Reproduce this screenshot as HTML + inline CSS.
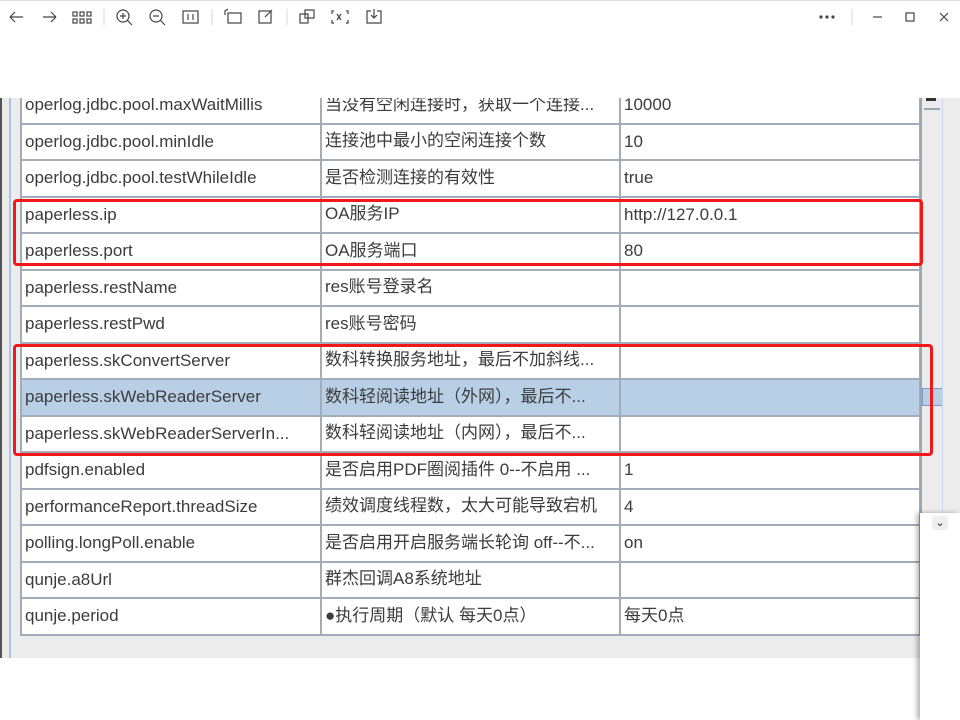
<!DOCTYPE html>
<html><head><meta charset="utf-8"><style>
*{margin:0;padding:0;box-sizing:border-box}
body{width:960px;height:720px;overflow:hidden;background:#fff;font-family:"Liberation Sans","Noto Sans CJK SC",sans-serif;position:relative}
.tb{position:absolute;top:0;left:0;width:960px;height:98px;background:#fff;border-top:1px solid #ddd}
.content{position:absolute;top:98px;left:0;width:922px;height:560px;background:#ececec;overflow:hidden}
.lb1{position:absolute;left:0;top:0;width:2px;height:560px;background:#555}
.lb2{position:absolute;left:9px;top:0;width:2px;height:560px;background:#a8c4e8}
table{position:absolute;left:20px;top:-12px;border-collapse:collapse;width:899px;table-layout:fixed;background:#fff}
td{height:36.5px;border:2px solid #a3adba;font-size:17px;line-height:20px;color:#3c3c3c;padding:0 0 0 3px;white-space:nowrap;overflow:hidden}
td.c{padding-bottom:1px}
tr.sel td{background:#b8cfe5}
.red{position:absolute;border:3px solid #f01818;border-radius:4px}
.sb{position:absolute;left:920px;top:98px;width:22px;height:415px;background:#ececec;border-left:2px solid #9aa6b4}
.panel{position:absolute;left:920px;top:513px;width:40px;height:207px;background:#fff;box-shadow:-3px 0 5px rgba(0,0,0,.3)}
</style></head><body>
<div class="tb">
<svg width="960" height="34" style="position:absolute;top:0;left:0" fill="none" stroke="#444" stroke-width="1.2">
<path d="M10 16h13M10 16l5-5M10 16l5 5"/>
<path d="M43 16h13M56 16l-5-5M56 16l-5 5"/>
<g><rect x="73" y="11" width="4" height="4"/><rect x="80" y="11" width="4" height="4"/><rect x="87" y="11" width="4" height="4"/><rect x="73" y="18" width="4" height="4"/><rect x="80" y="18" width="4" height="4"/><rect x="87" y="18" width="4" height="4"/></g>
<path d="M104 8v16" stroke="#ddd"/>
<circle cx="123" cy="15" r="6"/><path d="M127 19l5 5M120 15h6M123 12v6"/>
<circle cx="156" cy="15" r="6"/><path d="M160 19l5 5M153 15h6"/>
<rect x="183" y="10" width="15" height="12"/><path d="M188 13v6M191 14v0M193 13v6"/>
<path d="M212 8v16" stroke="#ddd"/>
<rect x="228" y="12" width="13" height="10"/><path d="M225 14v-4l3-2"/>
<rect x="259" y="10" width="12" height="12"/><path d="M265 16l7-7"/>
<path d="M287 8v16" stroke="#ddd"/>
<rect x="300" y="13" width="8" height="9"/><rect x="305" y="9" width="9" height="8"/>
<path d="M334 10h-2v3M346 10h2v3M334 22h-2v-3M346 22h2v-3M337 13l4 6M341 13l-4 6"/>
<path d="M367 10h4M377 10h4v12h-14v-12h1M374 8v9M371 14l3 3 3-3"/>
<circle cx="821" cy="16" r="1" fill="#444"/><circle cx="827" cy="16" r="1" fill="#444"/><circle cx="833" cy="16" r="1" fill="#444"/>
<path d="M852 8v16" stroke="#ddd"/>
<path d="M873 16h9"/><rect x="906" y="12" width="8" height="8"/><path d="M940 12l8 8M948 12l-8 8"/>
</svg>
</div>
<div class="content">
<div class="lb1"></div><div class="lb2"></div>
<table>
<colgroup><col style="width:300px"><col style="width:299px"><col style="width:300px"></colgroup>
<tr><td>operlog.jdbc.pool.maxWaitMillis</td><td class="c">当没有空闲连接时，获取一个连接...</td><td>10000</td></tr>
<tr><td>operlog.jdbc.pool.minIdle</td><td class="c">连接池中最小的空闲连接个数</td><td>10</td></tr>
<tr><td>operlog.jdbc.pool.testWhileIdle</td><td class="c">是否检测连接的有效性</td><td>true</td></tr>
<tr><td>paperless.ip</td><td class="c">OA服务IP</td><td>http://127.0.0.1</td></tr>
<tr><td>paperless.port</td><td class="c">OA服务端口</td><td>80</td></tr>
<tr><td>paperless.restName</td><td class="c">res账号登录名</td><td></td></tr>
<tr><td>paperless.restPwd</td><td class="c">res账号密码</td><td></td></tr>
<tr><td>paperless.skConvertServer</td><td class="c">数科转换服务地址，最后不加斜线...</td><td></td></tr>
<tr class="sel"><td>paperless.skWebReaderServer</td><td class="c">数科轻阅读地址（外网），最后不...</td><td></td></tr>
<tr><td>paperless.skWebReaderServerIn...</td><td class="c">数科轻阅读地址（内网），最后不...</td><td></td></tr>
<tr><td>pdfsign.enabled</td><td class="c">是否启用PDF圈阅插件 0--不启用 ...</td><td>1</td></tr>
<tr><td>performanceReport.threadSize</td><td class="c">绩效调度线程数，太大可能导致宕机</td><td>4</td></tr>
<tr><td>polling.longPoll.enable</td><td class="c">是否启用开启服务端长轮询 off--不...</td><td>on</td></tr>
<tr><td>qunje.a8Url</td><td class="c">群杰回调A8系统地址</td><td></td></tr>
<tr><td>qunje.period</td><td class="c">●执行周期（默认 每天0点）</td><td class="c">每天0点</td></tr>
</table>
</div>
<div class="sb"><div style="position:absolute;left:2px;top:0;width:16px;height:12px;border-bottom:2px solid #9aa6b4"></div><div style="position:absolute;left:4px;top:0;width:10px;height:3px;background:#333"></div>
<div style="position:absolute;left:0;top:290px;width:22px;height:18px;background:#b8cfe5;border:1px solid #7a9ad0"></div></div>
<div style="position:absolute;left:942px;top:98px;width:18px;height:415px;background:#ececec;border-left:1px solid #c8d8ee"></div>
<div class="panel"><div style="position:absolute;left:12px;top:3px;width:16px;height:14px;background:#eee;border-radius:3px;color:#224;font-size:11px;text-align:center;line-height:14px">⌄</div></div>
<div class="red" style="left:13px;top:199px;width:910px;height:67px"></div>
<div class="red" style="left:13px;top:344px;width:920px;height:112px"></div>
</body></html>
